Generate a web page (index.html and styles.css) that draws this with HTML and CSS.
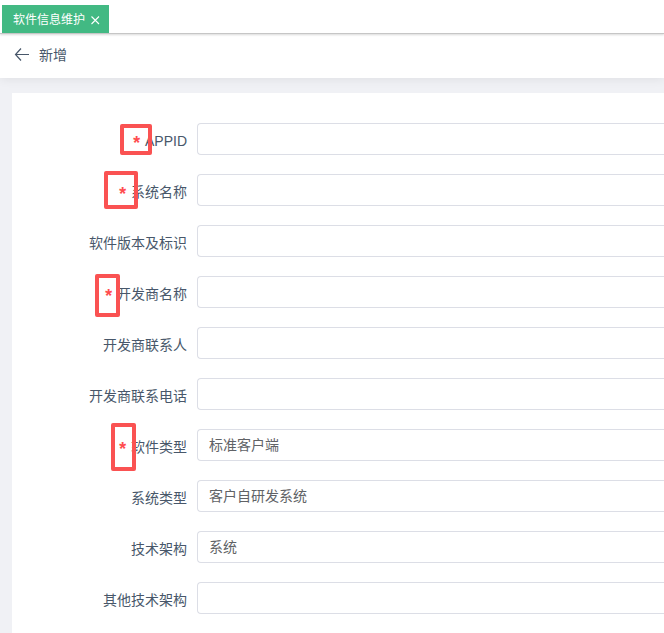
FILE: index.html
```html
<!DOCTYPE html>
<html lang="zh-CN">
<head>
  <meta charset="UTF-8" />
  <meta name="viewport" content="width=device-width, initial-scale=1.0"/>
  <title>软件信息维护</title>
  <link rel="stylesheet" href="styles.css">
</head>
<body>
  <nav class="tabs">
    <div class="tab">
      <span>软件信息维护</span>
      <button class="tab-close" type="button" aria-label="关闭">
        <svg width="10" height="10" viewBox="0 0 10 10"><path d="M1.5 1.5l7.5 7.5M9 1.5L1.5 9" fill="none" stroke="currentColor" stroke-width="1.1"/></svg>
      </button>
    </div>
  </nav>

  <header class="page-header">
    <button class="back" type="button" aria-label="返回">
      <svg width="16" height="14" viewBox="0 0 16 14"><path d="M7 1.5L1.5 7.5 7 13.5M1.5 7.5H15" fill="none" stroke="currentColor" stroke-width="1.2"/></svg>
    </button>
    <h1>新增</h1>
  </header>

  <main class="content">
    <form class="panel">
      <div class="form-item">
        <label class="required" for="appId">APPID</label>
        <input type="text" id="appId">
      </div>
      <div class="form-item">
        <label class="required" for="systemName">系统名称</label>
        <input type="text" id="systemName">
      </div>
      <div class="form-item">
        <label for="version">软件版本及标识</label>
        <input type="text" id="version">
      </div>
      <div class="form-item">
        <label class="required" for="developer">开发商名称</label>
        <input type="text" id="developer">
      </div>
      <div class="form-item">
        <label for="contact">开发商联系人</label>
        <input type="text" id="contact">
      </div>
      <div class="form-item">
        <label for="phone">开发商联系电话</label>
        <input type="text" id="phone">
      </div>
      <div class="form-item">
        <label class="required" for="softwareType">软件类型</label>
        <select id="softwareType"><option>标准客户端</option></select>
      </div>
      <div class="form-item">
        <label for="systemType">系统类型</label>
        <select id="systemType"><option>客户自研发系统</option></select>
      </div>
      <div class="form-item">
        <label for="framework">技术架构</label>
        <select id="framework"><option>系统</option></select>
      </div>
      <div class="form-item">
        <label for="otherFramework">其他技术架构</label>
        <input type="text" id="otherFramework">
      </div>

      <!-- highlight frames over the required marks -->
      <div class="mark mark-app-id"></div>
      <div class="mark mark-system-name"></div>
      <div class="mark mark-developer"></div>
      <div class="mark mark-software-type"></div>
    </form>
  </main>
</body>
</html>
```

FILE: styles.css
```css
* { box-sizing: border-box; }
body {
  margin: 0;
  min-height: 100vh;
  display: flex;
  flex-direction: column;
  font-family: "Liberation Sans", "Noto Sans CJK SC", sans-serif;
  font-size: 14px;
  color: #48576a;
  background: #f0f1f5;
}
button {
  display: flex;
  padding: 0;
  border: none;
  background: none;
  color: inherit;
  cursor: pointer;
}
.tabs {
  position: relative;
  display: flex;
  padding: 5px 2px 0;
  background: #fff;
  border-bottom: 1px solid #c6c6c6;
  box-shadow: 0 1px 2px rgba(0, 0, 0, 0.15);
}
.tab {
  display: flex;
  align-items: center;
  gap: 5px;
  height: 28px;
  padding: 0 9px 2px 11px;
  font-size: 12px;
  color: #fff;
  background: #42b983;
}
.tab-close {
  padding-top: 3px;
}
.page-header {
  display: flex;
  align-items: center;
  gap: 9px;
  height: 44px;
  padding: 0 14px 4px;
  background: #fff;
  box-shadow: 0 1px 10px rgba(0, 0, 0, 0.08);
}
.page-header h1 {
  margin: 0;
  font-size: 14px;
  font-weight: normal;
}
.content {
  flex: 1;
  display: flex;
  padding: 15px 0 0 12px;
}
.panel {
  position: relative;
  flex: 1;
  padding: 30px 0 0;
  background: #fff;
}
.form-item {
  display: flex;
  margin-bottom: 19px;
}
.form-item label {
  width: 185px;
  height: 32px;
  padding-right: 10px;
  line-height: 36px;
  text-align: right;
}
.required::before {
  content: "*";
  display: inline-block;
  margin-right: 3px;
  font-family: "Liberation Mono", monospace;
  font-size: 18px;
  line-height: 18px;
  vertical-align: -3px;
  color: #ff4d4f;
  font-weight: bold;
}
/* fields run flush to the right side of the window */
.form-item input,
.form-item select {
  flex: 1;
  min-width: 0;
  height: 32px;
  padding: 0 11px;
  border: 1px solid #dcdee6;
  border-right: none;
  border-radius: 4px 0 0 4px;
  font: inherit;
  color: #606266;
  background: #fff;
  appearance: none;
  outline: none;
}
.mark {
  position: absolute;
  border: 4px solid #fa5252;
  border-radius: 2px;
}
.mark-app-id {
  top: 31px;
  left: 108px;
  width: 32px;
  height: 31px;
}
.mark-system-name {
  top: 78px;
  left: 92px;
  width: 34px;
  height: 38px;
}
.mark-developer {
  top: 181px;
  left: 83px;
  width: 25px;
  height: 43px;
}
.mark-software-type {
  top: 330px;
  left: 99px;
  width: 25px;
  height: 48px;
}
```
